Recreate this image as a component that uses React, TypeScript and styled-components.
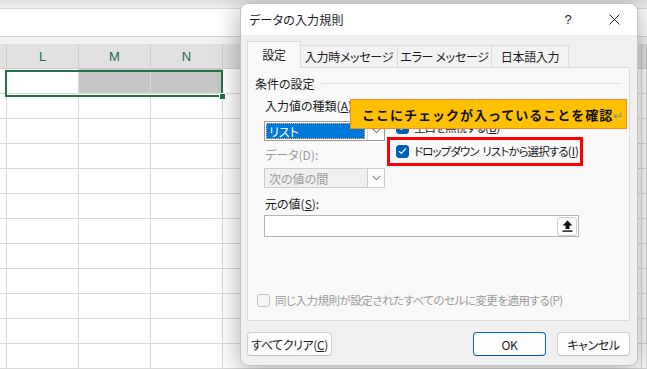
import React from "react";
import styled, { createGlobalStyle, css } from "styled-components";

const Global = createGlobalStyle`
  html, body { margin: 0; padding: 0; background: #fff; }
  body { font-family: "Noto Sans CJK JP", "Noto Sans", sans-serif; }
  #root { width: 647px; height: 369px; }
`;

const Page = styled.div`
  position: relative;
  width: 647px;
  height: 369px;
  overflow: hidden;
  background: #fff;
`;

/* ---------- spreadsheet ---------- */
const Sheet = styled.div`
  display: flex;
  flex-direction: column;
  height: 100%;
`;
const RibbonEdge = styled.div`
  height: 9px;
  background: linear-gradient(#dedede, #f1f1f1);
  border-bottom: 1px solid #d8d8d8;
`;
const FormulaArea = styled.div`
  height: 29px;
  background: #fff;
  border-bottom: 1px solid #d2d2d2;
`;
const HeaderGap = styled.div`
  height: 7px;
  background: #f2f2f2;
`;
const Grid = styled.div`
  display: grid;
  grid-template-columns: 7px 72px 72px 72px 419px 1fr;
  grid-template-rows: 25px;
  grid-auto-rows: 25px;
`;
const HeadCell = styled.div`
  box-sizing: border-box;
  background: #e1e1e1;
  border-right: 1px solid #cdcdcd;
  border-bottom: 1px solid #cdcdcd;
  display: flex;
  align-items: center;
  justify-content: center;
  font-family: "Liberation Sans", "Noto Sans", sans-serif;
  font-size: 13px;
  color: #1d6c58;
`;
const Cell = styled.div<{ $sel?: boolean }>`
  box-sizing: border-box;
  border-right: 1px solid #dadada;
  border-bottom: 1px solid #dadada;
  background: ${(p) => (p.$sel ? "#c6c6c6" : "#fff")};
`;
const Selection = styled.div`
  position: absolute;
  left: 5px;
  top: 70px;
  width: 218px;
  height: 27px;
  box-sizing: border-box;
  border: 2px solid #217346;
`;
const FillHandle = styled.div`
  position: absolute;
  left: 219px;
  top: 93px;
  width: 7px;
  height: 7px;
  box-sizing: border-box;
  background: #217346;
  border: 1px solid #fff;
`;

/* ---------- dialog ---------- */
const Dialog = styled.div`
  position: absolute;
  left: 240px;
  top: 3px;
  width: 398px;
  height: 363px;
  box-sizing: border-box;
  border: 1px solid #c4c4c4;
  border-radius: 8px;
  background: #f0f0f0;
  box-shadow: 0 4px 26px rgba(0, 0, 0, 0.34);
  display: flex;
  flex-direction: column;
  overflow: hidden;
  font-size: 12px;
  color: #1b1b1b;
  font-feature-settings: "palt";
`;
const TitleBar = styled.div`
  height: 31px;
  flex: none;
  background: #fff;
  display: flex;
  align-items: center;
  padding-left: 8px;
`;
const Title = styled.div`
  flex: 1;
  font-size: 12px;
  letter-spacing: 0.2px;
`;
const TitleButton = styled.div`
  width: 46px;
  height: 31px;
  display: flex;
  align-items: center;
  justify-content: center;
  font-family: "Liberation Sans", sans-serif;
  font-size: 13px;
  color: #222;
`;
const Body = styled.div`
  flex: 1;
  display: flex;
  flex-direction: column;
  padding: 7px 7px 0 6px;
`;
const Tabs = styled.div`
  display: flex;
  align-items: flex-end;
  height: 26px;
  position: relative;
  z-index: 1;
  margin-bottom: -1px;
`;
const Tab = styled.div<{ $active?: boolean; $w: number }>`
  box-sizing: border-box;
  width: ${(p) => p.$w}px;
  display: flex;
  align-items: center;
  justify-content: center;
  border: 1px solid #dcdcdc;
  border-bottom: none;
  white-space: pre;
  letter-spacing: -0.3px;
  ${(p) =>
    p.$active
      ? css`
          height: 27px;
          background: #f9f9f9;
          padding-bottom: 2px;
        `
      : css`
          height: 23px;
          background: #f2f2f2;
          margin-left: -1px;
          border-bottom: 1px solid #dcdcdc;
        `}
`;
const Panel = styled.div`
  box-sizing: border-box;
  height: 254px;
  width: 383px;
  border: 1px solid #dcdcdc;
  background: #f9f9f9;
  display: flex;
  flex-direction: column;
  padding: 7px 9px 0 7px;
`;
const Legend = styled.div`
  display: flex;
  align-items: center;
  gap: 6px;
  height: 16px;
  &::after {
    content: "";
    flex: 1;
    height: 1px;
    background: #dcdcdc;
  }
`;
const Settings = styled.div`
  display: grid;
  grid-template-columns: 121px 1fr;
  column-gap: 11px;
  padding-left: 9px;
  margin-top: 7px;
`;
const Col = styled.div`
  display: flex;
  flex-direction: column;
`;
const Label = styled.div<{ $disabled?: boolean; $gap?: number }>`
  height: 16px;
  line-height: 16px;
  white-space: nowrap;
  padding-left: 1px;
  margin-top: ${(p) => p.$gap ?? 0}px;
  color: ${(p) => (p.$disabled ? "#9c9c9c" : "#1b1b1b")};
`;
const Combo = styled.div<{ $disabled?: boolean; $gap?: number }>`
  box-sizing: border-box;
  height: 20px;
  margin-top: ${(p) => p.$gap ?? 0}px;
  display: flex;
  border: 1px solid ${(p) => (p.$disabled ? "#cccccc" : "#9a9a9a")};
  background: ${(p) => (p.$disabled ? "#f0f0f0" : "#fff")};
`;
const ComboValue = styled.div<{ $selected?: boolean; $disabled?: boolean }>`
  flex: 1;
  display: flex;
  align-items: center;
  padding-left: 3px;
  margin: 1px 2px 1px 1px;
  ${(p) =>
    p.$selected &&
    css`
      background: #0078d7;
      color: #fff;
      outline: 1px dotted #f3b94e;
      outline-offset: -1px;
    `}
  ${(p) => p.$disabled && css`color: #9c9c9c;`}
`;
const ComboArrow = styled.div<{ $disabled?: boolean }>`
  width: 16px;
  display: flex;
  align-items: center;
  justify-content: center;
  border-left: 1px solid ${(p) => (p.$disabled ? "#cccccc" : "#d6d6d6")};
  background: #fff;
`;
const CheckCol = styled.div`
  display: flex;
  flex-direction: column;
  gap: 6px;
  padding-top: 20px;
`;
const CheckRow = styled.div<{ $disabled?: boolean }>`
  display: flex;
  align-items: center;
  gap: 5px;
  height: 18px;
  white-space: pre;
  color: ${(p) => (p.$disabled ? "#9c9c9c" : "#1b1b1b")};
`;
const CheckText = styled.span<{ $spacing: number; $size?: number }>`
  letter-spacing: ${(p) => p.$spacing}px;
  word-spacing: 2px;
  font-size: ${(p) => p.$size ?? 12}px;
`;
const Key = styled.span`
  letter-spacing: 0;
`;
const Box = styled.div<{ $checked?: boolean }>`
  box-sizing: border-box;
  width: 13px;
  height: 13px;
  border-radius: 3px;
  flex: none;
  display: flex;
  align-items: center;
  justify-content: center;
  ${(p) =>
    p.$checked
      ? css`
          background: #005fb8;
          border: 1px solid #005fb8;
        `
      : css`
          background: #f6f6f6;
          border: 1px solid #c2c2c2;
        `}
`;
const SourceBlock = styled.div`
  padding-left: 9px;
  display: flex;
  flex-direction: column;
`;
const TextInput = styled.div`
  box-sizing: border-box;
  width: 315px;
  height: 22px;
  margin-top: 3px;
  border: 1px solid #b4b4b4;
  background: #fff;
  display: flex;
  justify-content: flex-end;
  align-items: center;
  padding-right: 1px;
`;
const RefButton = styled.div`
  box-sizing: border-box;
  width: 20px;
  height: 19px;
  border: 1px solid #cfcfcf;
  border-radius: 3px;
  background: #fdfdfd;
  display: flex;
  align-items: center;
  justify-content: center;
`;
const ApplyAll = styled.div`
  margin-top: auto;
  margin-bottom: 11px;
  padding-left: 2px;
`;
const Footer = styled.div`
  display: flex;
  align-items: center;
  gap: 11px;
  margin-top: 11px;
  width: 383px;
`;
const Button = styled.div<{ $w: number; $primary?: boolean }>`
  box-sizing: border-box;
  width: ${(p) => p.$w}px;
  height: 24px;
  display: flex;
  align-items: center;
  justify-content: center;
  background: #fdfdfd;
  border-radius: 4px;
  border: 1px solid ${(p) => (p.$primary ? "#0067c0" : "#d0d0d0")};
  border-bottom-color: ${(p) => (p.$primary ? "#0055a0" : "#bdbdbd")};
  white-space: nowrap;
  letter-spacing: -0.4px;
  font-family: "Noto Sans CJK JP", "Liberation Sans", sans-serif;
`;
const Spacer = styled.div`
  flex: 1;
`;

/* ---------- annotations ---------- */
const Callout = styled.div`
  position: absolute;
  left: 350px;
  top: 99px;
  width: 277px;
  height: 30px;
  box-sizing: border-box;
  background: #ffc000;
  border: 1px solid #ed8d2f;
  display: flex;
  align-items: center;
  padding-left: 11px;
  font-family: "Noto Sans CJK JP", sans-serif;
  font-weight: 700;
  font-size: 13px;
  letter-spacing: 1px;
  color: #111;
  white-space: nowrap;
`;
const ReturnMark = styled.span`
  font-weight: 400;
  color: #8a8a8a;
  font-size: 12px;
  letter-spacing: 0;
`;
const RedFrame = styled.div`
  position: absolute;
  left: 387px;
  top: 137px;
  width: 196px;
  height: 29px;
  box-sizing: border-box;
  border: 3px solid #ff0000;
`;

const Chevron = () => (
  <svg width="9" height="6" viewBox="0 0 9 6">
    <polyline points="0.5,0.8 4.5,4.8 8.5,0.8" fill="none" stroke="#555" strokeWidth="1" />
  </svg>
);
const Check = () => (
  <svg width="9" height="8" viewBox="0 0 9 8">
    <polyline points="1,4.2 3.4,6.4 8,1.4" fill="none" stroke="#fff" strokeWidth="1.2" />
  </svg>
);
const UpArrow = () => (
  <svg width="11" height="12" viewBox="0 0 11 12">
    <polygon points="5.5,0.5 10.5,5.5 7.5,5.5 7.5,9 3.5,9 3.5,5.5 0.5,5.5" fill="#111" />
    <rect x="0.5" y="10.4" width="10" height="1.4" fill="#111" />
  </svg>
);
const CloseX = () => (
  <svg width="11" height="11" viewBox="0 0 11 11">
    <path d="M0.5 0.5 L10.5 10.5 M10.5 0.5 L0.5 10.5" stroke="#222" strokeWidth="1" />
  </svg>
);

const rows = Array.from({ length: 12 }, (_, i) => i);

export default function App() {
  return (
    <Page>
      <Global />
      <Sheet>
        <RibbonEdge />
        <FormulaArea />
        <HeaderGap />
        <Grid>
          <HeadCell />
          <HeadCell>L</HeadCell>
          <HeadCell>M</HeadCell>
          <HeadCell>N</HeadCell>
          <HeadCell />
          <HeadCell />
          {rows.map((r) => (
            <React.Fragment key={r}>
              <Cell />
              <Cell />
              <Cell $sel={r === 0} />
              <Cell $sel={r === 0} />
              <Cell />
              <Cell />
            </React.Fragment>
          ))}
        </Grid>
      </Sheet>
      <Selection />
      <FillHandle />

      <Dialog>
        <TitleBar>
          <Title>データの入力規則</Title>
          <TitleButton>?</TitleButton>
          <TitleButton>
            <CloseX />
          </TitleButton>
        </TitleBar>
        <Body>
          <Tabs>
            <Tab $active $w={54}>設定</Tab>
            <Tab $w={98}>入力時メッセージ</Tab>
            <Tab $w={95}>エラー メッセージ</Tab>
            <Tab $w={78}>日本語入力</Tab>
          </Tabs>
          <Panel>
            <Legend>条件の設定</Legend>
            <Settings>
              <Col>
                <Label>
                  入力値の種類(<u>A</u>):
                </Label>
                <Combo $gap={7}>
                  <ComboValue $selected>リスト</ComboValue>
                  <ComboArrow>
                    <Chevron />
                  </ComboArrow>
                </Combo>
                <Label $disabled $gap={6}>
                  データ(D):
                </Label>
                <Combo $disabled $gap={5}>
                  <ComboValue $disabled>次の値の間</ComboValue>
                  <ComboArrow $disabled>
                    <Chevron />
                  </ComboArrow>
                </Combo>
              </Col>
              <CheckCol>
                <CheckRow>
                  <Box $checked>
                    <Check />
                  </Box>
                  <CheckText $spacing={-0.9} $size={11.5}>
                    空白を無視する<Key>(<u>B</u>)</Key>
                  </CheckText>
                </CheckRow>
                <CheckRow>
                  <Box $checked>
                    <Check />
                  </Box>
                  <CheckText $spacing={-0.9} $size={11.5}>
                    ドロップダウン リストから選択する<Key>(<u>I</u>)</Key>
                  </CheckText>
                </CheckRow>
              </CheckCol>
            </Settings>
            <SourceBlock>
              <Label $gap={8}>
                元の値(<u>S</u>):
              </Label>
              <TextInput>
                <RefButton>
                  <UpArrow />
                </RefButton>
              </TextInput>
            </SourceBlock>
            <ApplyAll>
              <CheckRow $disabled>
                <Box />
                <CheckText $spacing={-0.5} $size={11.5}>
                  同じ入力規則が設定されたすべてのセルに変更を適用する(P)
                </CheckText>
              </CheckRow>
            </ApplyAll>
          </Panel>
          <Footer>
            <Button $w={85}>
              すべてクリア(<u>C</u>)
            </Button>
            <Spacer />
            <Button $w={73} $primary>
              OK
            </Button>
            <Button $w={73}>キャンセル</Button>
          </Footer>
        </Body>
      </Dialog>

      <Callout>
        ここにチェックが入っていることを確認<ReturnMark>↵</ReturnMark>
      </Callout>
      <RedFrame />
    </Page>
  );
}
